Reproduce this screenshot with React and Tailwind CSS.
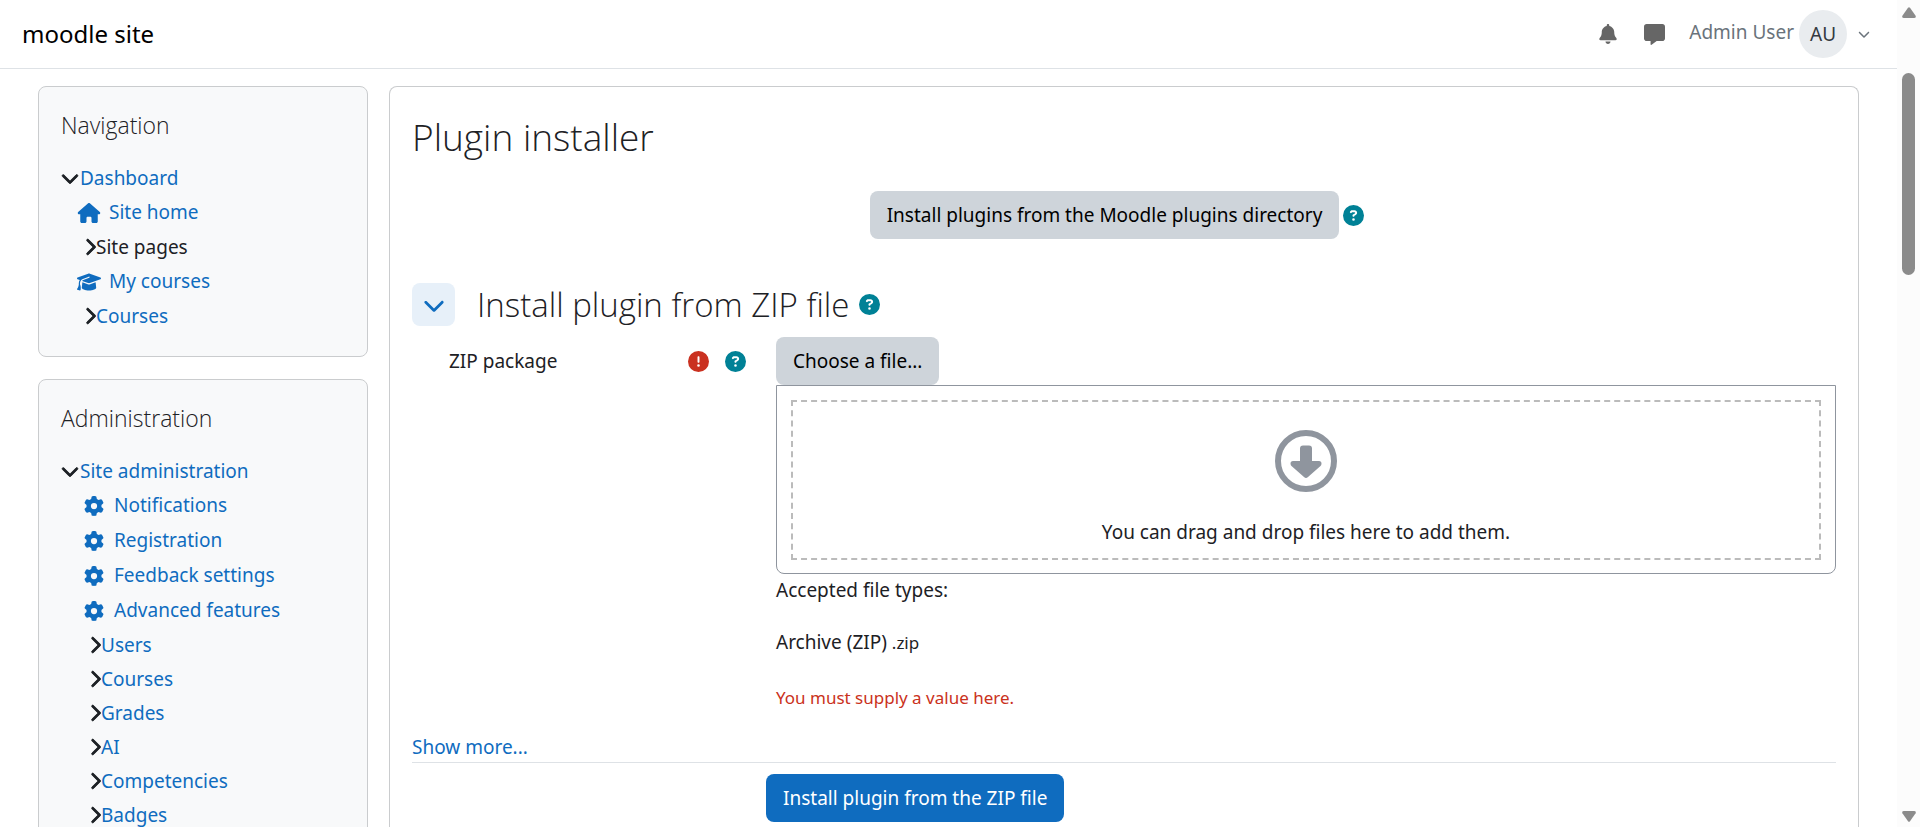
import {
  FaBell,
  FaChevronDown,
  FaChevronRight,
  FaCircleExclamation,
  FaCircleQuestion,
  FaGear,
  FaGraduationCap,
  FaHouse,
  FaMessage,
} from 'react-icons/fa6'

const navigation = [
  { label: 'Site home', icon: FaHouse },
  { label: 'Site pages', plain: true },
  { label: 'My courses', icon: FaGraduationCap },
  { label: 'Courses' },
]

const administration = [
  { label: 'Notifications', icon: FaGear },
  { label: 'Registration', icon: FaGear },
  { label: 'Feedback settings', icon: FaGear },
  { label: 'Advanced features', icon: FaGear },
  { label: 'Users' },
  { label: 'Courses' },
  { label: 'Grades' },
  { label: 'AI' },
  { label: 'Competencies' },
  { label: 'Badges' },
]

function Block({ title, root, items, indent }) {
  return (
    <section className="rounded-lg border border-[#caccce] bg-[#f8f9fa] px-[22px] pt-5 pb-[23px]">
      <h2 className="font-['Open_Sans',sans-serif] text-[23px] leading-9 font-light">{title}</h2>
      <ul className="mt-[18px]">
        <li className="flex h-[34px] items-center">
          <button aria-label={`Collapse ${root}`} className="flex w-[19px] text-[#1d2125]">
            <FaChevronDown className="h-[18px] w-[18px] shrink-0 stroke-current [stroke-width:24]" />
          </button>
          <a href="#" className="text-[19px] text-[#0f6cbf]">{root}</a>
        </li>
        <li>
          <ul className={indent}>
            {items.map((item) => (
              <TreeItem key={item.label} item={item} />
            ))}
          </ul>
        </li>
      </ul>
    </section>
  )
}

function TreeItem({ item }) {
  const Icon = item.icon

  if (Icon) {
    return (
      <li className="h-[35px]">
        <a href="#" className="flex h-full items-center gap-2 text-[19px] text-[#0f6cbf]">
          <span className="flex w-6 justify-center">
            <Icon className="h-5 w-6 shrink-0" />
          </span>
          {item.label}
        </a>
      </li>
    )
  }

  return (
    <li className="flex h-[34px] items-center pl-[7px]">
      <button aria-label={`Expand ${item.label}`} className="flex w-3 justify-center text-[#1d2125]">
        <FaChevronRight className="h-[18px] w-3 shrink-0 stroke-current [stroke-width:24]" />
      </button>
      {item.plain ? (
        <span className="text-[19px]">{item.label}</span>
      ) : (
        <a href="#" className="text-[19px] text-[#0f6cbf]">{item.label}</a>
      )}
    </li>
  )
}

function HelpButton() {
  return (
    <button type="button" aria-label="Help" className="flex text-[#008196]">
      <FaCircleQuestion className="h-[21px] w-[21px]" />
    </button>
  )
}

function Header() {
  return (
    <header className="flex h-[69px] items-center justify-between border-b border-[#dee2e6] pr-[27px] pl-[22px]">
      <a href="#" className="text-2xl text-black">moodle site</a>
      <div className="flex items-center text-[#6a737b]">
        <button aria-label="Notifications" className="mr-[27px] flex text-[#666]">
          <FaBell className="h-5 w-[18px]" />
        </button>
        <button aria-label="Messages" className="mr-6 flex text-[#666]">
          <FaMessage className="h-[21px] w-[21px]" />
        </button>
        <button className="flex items-center text-[19px]">
          <span className="pb-1">Admin User</span>
          <span className="ml-[5px] flex h-12 w-12 items-center justify-center rounded-full bg-[#e9ecef] text-[#343a40]">
            AU
          </span>
          <FaChevronDown className="ml-[11px] h-3 w-3" />
        </button>
      </div>
    </header>
  )
}

function DropArea() {
  return (
    <div className="rounded-b-lg border border-[#8f959e] px-[14px] pt-[14px] pb-[13px]">
      <div className="flex h-40 flex-col items-center border-2 border-dashed border-[#bbb] pt-7">
        <svg viewBox="0 0 62 62" className="h-[62px] w-[62px]" aria-hidden="true">
          <circle cx="31" cy="31" r="28" fill="none" stroke="#8f959e" strokeWidth="6" />
          <path
            d="M28 15.500h6q3 0 3 3V31h7q2.500 0 2.500 2.500 0 1.500-1 2.500L33 47q-2 2-4 0L16.500 36q-1-1-1-2.500Q15.500 31 18 31h7V18.500q0-3 3-3z"
            fill="#8f959e"
          />
        </svg>
        <p className="mt-6 text-[19px] leading-8">You can drag and drop files here to add them.</p>
      </div>
    </div>
  )
}

function PluginInstaller() {
  return (
    <main className="min-w-0 flex-1 rounded-t-lg border border-b-0 border-[#caccce] px-[22px] pt-6">
      <h1 className="font-['Open_Sans',sans-serif] text-[37px] leading-[52px] font-light">Plugin installer</h1>

      <div className="mt-7 flex items-center justify-center gap-1 pr-[14px]">
        <button className="h-12 rounded-lg bg-[#ced4da] px-[17px] text-[19px] text-black">
          Install plugins from the Moodle plugins directory
        </button>
        <HelpButton />
      </div>

      <div className="mt-11 flex items-center">
        <button
          aria-label="Collapse section"
          className="flex h-[43px] w-[43px] items-center justify-center rounded-lg bg-[#e7f0f9] text-[#0f6cbf]"
        >
          <FaChevronDown className="h-[22px] w-[22px]" />
        </button>
        <h2 className="mr-[10px] ml-[22px] font-['Open_Sans',sans-serif] text-[33px] leading-[43px] font-light">
          Install plugin from ZIP file
        </h2>
        <HelpButton />
      </div>

      <form className="mt-[11px]" onSubmit={(e) => e.preventDefault()}>
        <div className="flex">
          <div className="flex h-12 w-1/4 items-center pr-[22px] pl-[37px]">
            <span className="flex-1 text-[19px]">ZIP package</span>
            <span className="flex gap-4">
              <FaCircleExclamation className="h-[21px] w-[21px] text-[#ca3120]" aria-label="Required" />
              <HelpButton />
            </span>
          </div>
          <div className="ml-2 min-w-0 flex-1">
            <button type="button" className="block h-12 rounded-lg bg-[#ced4da] px-[17px] text-[19px] text-black">
              Choose a file...
            </button>
            <DropArea />
            <p className="text-[19px] leading-8">Accepted file types:</p>
            <p className="mt-5 text-[19px] leading-8">
              Archive (ZIP) <small className="text-[17px]">.zip</small>
            </p>
            <p className="mt-6 text-[17px] leading-[30px] text-[#ca3120]">You must supply a value here.</p>
          </div>
        </div>

        <div className="mt-[19px] border-b border-[#dee2e6]">
          <a href="#" className="block text-[19px] leading-[30px] text-[#0f6cbf]">Show more...</a>
        </div>
        <div className="mt-[11px] flex">
          <div className="w-1/4" />
          <button type="submit" className="-ml-0.5 h-12 rounded-lg bg-[#0f6cbf] px-[17px] text-[19px] text-white">
            Install plugin from the ZIP file
          </button>
        </div>
      </form>
    </main>
  )
}

function ScrollTrack() {
  return (
    <div className="flex w-[23px] flex-col items-center bg-[#fcfcfc] pt-[7px] pb-[5px]" aria-hidden="true">
      <svg viewBox="0 0 14 11" className="h-[11px] w-[14px] fill-[#8b8b8b]">
        <path d="M6 .700q1-1 2 0l5.600 8q.8 2.300-1.600 2.300H2Q-.400 11 .400 8.700z" />
      </svg>
      <div className="mt-[55px] h-[202px] w-[13px] rounded-full bg-[#8b8b8b]" />
      <svg viewBox="0 0 14 11" className="mt-auto h-[11px] w-[14px] fill-[#8b8b8b]">
        <path d="M6 10.300q1 1 2 0l5.600-8Q14.400 0 12 0H2Q-.400 0 .400 2.300z" />
      </svg>
    </div>
  )
}

export default function App() {
  return (
    <div className="flex h-screen overflow-hidden bg-white font-['Noto_Sans','Open_Sans',sans-serif] text-[#1d2125]">
      <div className="min-w-0 flex-1">
        <Header />
        <div className="flex gap-[21px] px-[38px] pt-[17px]">
          <aside className="flex w-[330px] shrink-0 flex-col gap-[22px]">
            <Block title="Navigation" root="Dashboard" items={navigation} indent="pl-4" />
            <Block title="Administration" root="Site administration" items={administration} indent="pl-[21px]" />
          </aside>
          <PluginInstaller />
        </div>
      </div>
      <ScrollTrack />
    </div>
  )
}
